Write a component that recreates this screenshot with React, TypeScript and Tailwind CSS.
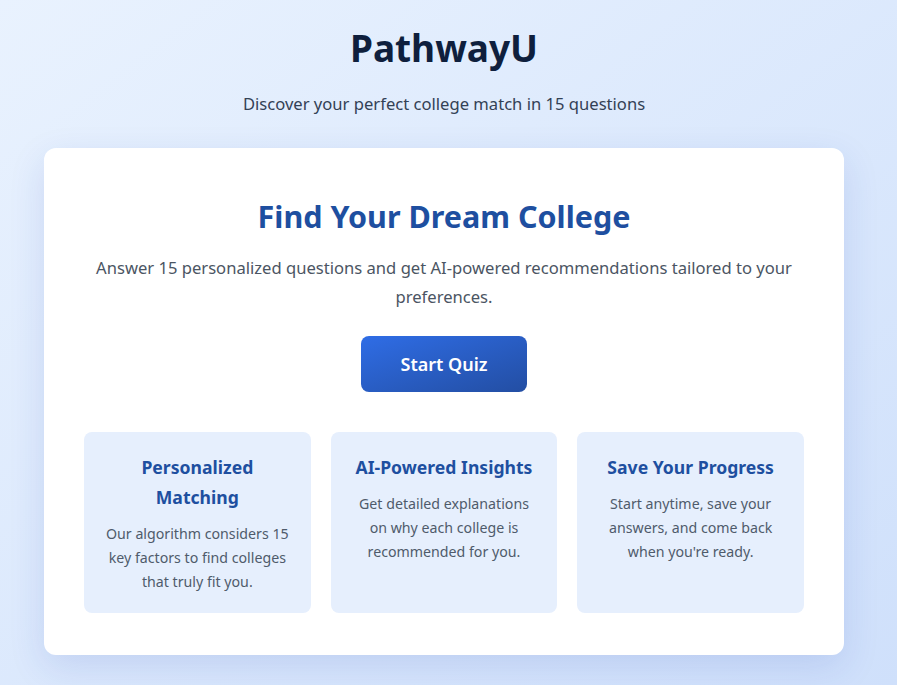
import React from 'react';

const features = [
  {
    title: 'Personalized Matching',
    text: 'Our algorithm considers 15 key factors to find colleges that truly fit you.',
  },
  {
    title: 'AI-Powered Insights',
    text: 'Get detailed explanations on why each college is recommended for you.',
  },
  {
    title: 'Save Your Progress',
    text: "Start anytime, save your answers, and come back when you're ready.",
  },
];

export default function App() {
  return (
    <div className="min-h-[685px] bg-gradient-to-br from-[#e9f2fe] to-[#cfe0fb] pl-[44px] pt-[24px] pb-8 font-['Noto_Sans',sans-serif]">
      <div className="w-[800px]">
        <header className="text-center">
          <h1 className="text-[37px] font-bold leading-[48px] text-[#0f1f3d]">PathwayU</h1>
          <p className="mt-[20px] text-[16.6px] leading-6 text-[#334155]">
            Discover your perfect college match in 15 questions
          </p>
        </header>

        <main className="mt-[32px] rounded-xl bg-white px-10 pt-[48px] pb-[42px] shadow-[0_12px_36px_rgba(30,64,175,0.13)]">
          <div className="text-center">
            <h2 className="text-[30.5px] font-bold leading-10 text-[#1e4fa0]">Find Your Dream College</h2>
            <p className="mx-auto mt-[17px] max-w-[700px] text-[16.6px] leading-[29px] text-[#4b5563]">
              Answer 15 personalized questions and get AI-powered recommendations tailored to your preferences.
            </p>
            <button className="mt-[25px] h-14 w-[166px] rounded-lg bg-gradient-to-br from-[#2f6de6] to-[#234ea3] text-[18px] font-semibold text-white">
              Start Quiz
            </button>
          </div>

          <div className="mt-10 grid grid-cols-3 gap-5">
            {features.map((f) => (
              <div key={f.title} className="h-[181px] rounded-lg bg-[#e6effd] px-[22px] pt-[20px] text-center">
                <h3 className="text-[17.6px] font-bold leading-[30px] text-[#1e4fa0]">{f.title}</h3>
                <p className="mt-[10px] text-[14.2px] leading-6 text-[#4f5b6b]">{f.text}</p>
              </div>
            ))}
          </div>
        </main>
      </div>
    </div>
  );
}
